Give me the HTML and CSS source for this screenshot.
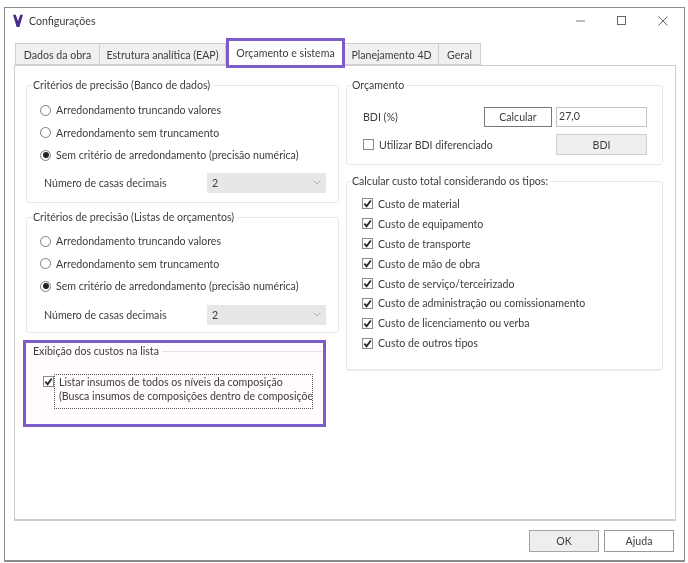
FILE: index.html
```html
<!DOCTYPE html>
<html lang="pt">
<head>
<meta charset="utf-8">
<title>Configurações</title>
<link rel="stylesheet" href="styles.css">
</head>
<body>
<svg class="defs" width="0" height="0" aria-hidden="true">
  <symbol id="chk" viewBox="0 0 12 12"><path d="M2.600 6.200 5 9 9.600 2.600" fill="none" stroke="#222" stroke-width="1.900"/></symbol>
</svg>
<div class="window">
  <header class="titlebar">
    <svg class="logo" viewBox="0 0 11 14"><path d="M0 0h3l2.500 7L8 0h3L8.200 9.500 7 13.500H4L2.800 9.500z" fill="#4b2a8c"/></svg>
    <span class="title">Configurações</span>
    <div class="controls">
      <svg viewBox="0 0 10 10"><path d="M0 5h9" stroke="#777" fill="none"/></svg>
      <svg viewBox="0 0 10 10"><rect x=".5" y=".5" width="8" height="8" stroke="#666" fill="none"/></svg>
      <svg viewBox="0 0 10 10"><path d="M.5.5l9 9M9.500.5l-9 9" stroke="#666" fill="none"/></svg>
    </div>
  </header>

  <nav class="tabs">
    <div class="tab w1">Dados da obra</div>
    <div class="tab w2">Estrutura analítica (EAP)</div>
    <div class="tab active">Orçamento e sistema</div>
    <div class="tab w4">Planejamento 4D</div>
    <div class="tab w5">Geral</div>
  </nav>

  <main class="pane">
    <div class="col left">
      <fieldset class="group g-prec">
        <legend>Critérios de precisão (Banco de dados)</legend>
        <label class="radio"><span class="dot"></span>Arredondamento truncando valores</label>
        <label class="radio"><span class="dot"></span>Arredondamento sem truncamento</label>
        <label class="radio"><span class="dot on"></span>Sem critério de arredondamento (precisão numérica)</label>
        <div class="decimals"><span>Número de casas decimais</span>
          <div class="select">2<svg viewBox="0 0 8 5"><path d="M.5.5 4 4 7.500.5" stroke="#aaa" fill="none"/></svg></div>
        </div>
      </fieldset>
      <fieldset class="group g-prec">
        <legend>Critérios de precisão (Listas de orçamentos)</legend>
        <label class="radio"><span class="dot"></span>Arredondamento truncando valores</label>
        <label class="radio"><span class="dot"></span>Arredondamento sem truncamento</label>
        <label class="radio"><span class="dot on"></span>Sem critério de arredondamento (precisão numérica)</label>
        <div class="decimals"><span>Número de casas decimais</span>
          <div class="select">2<svg viewBox="0 0 8 5"><path d="M.5.5 4 4 7.500.5" stroke="#aaa" fill="none"/></svg></div>
        </div>
      </fieldset>
      <section class="highlight">
        <div class="hl-legend"><span>Exibição dos custos na lista</span><i></i></div>
        <div class="hl-row">
          <span class="box"><svg><use href="#chk"/></svg></span>
          <div class="focus">Listar insumos de todos os níveis da composição<br>(Busca insumos de composições dentro de composições)</div>
        </div>
      </section>
    </div>

    <div class="col right">
      <fieldset class="group g-orc">
        <legend>Orçamento</legend>
        <div class="bdi-row"><span class="bdi-label">BDI (%)</span><button class="btn calc">Calcular</button><div class="input">27,0</div></div>
        <div class="bdi-row second"><label class="check wide"><span class="box"></span>Utilizar BDI diferenciado</label><button class="btn flat">BDI</button></div>
      </fieldset>
      <fieldset class="group g-custo">
        <legend>Calcular custo total considerando os tipos:</legend>
        <label class="check"><span class="box"><svg><use href="#chk"/></svg></span>Custo de material</label>
        <label class="check"><span class="box"><svg><use href="#chk"/></svg></span>Custo de equipamento</label>
        <label class="check"><span class="box"><svg><use href="#chk"/></svg></span>Custo de transporte</label>
        <label class="check"><span class="box"><svg><use href="#chk"/></svg></span>Custo de mão de obra</label>
        <label class="check"><span class="box"><svg><use href="#chk"/></svg></span>Custo de serviço/terceirizado</label>
        <label class="check"><span class="box"><svg><use href="#chk"/></svg></span>Custo de administração ou comissionamento</label>
        <label class="check"><span class="box"><svg><use href="#chk"/></svg></span>Custo de licenciamento ou verba</label>
        <label class="check"><span class="box"><svg><use href="#chk"/></svg></span>Custo de outros tipos</label>
      </fieldset>
    </div>
  </main>

  <footer class="footer">
    <button class="btn ok">OK</button>
    <button class="btn help">Ajuda</button>
  </footer>
</div>
</body>
</html>
```
FILE: styles.css
```css
* { box-sizing: border-box; }
html, body { margin: 0; height: 100%; background: #fff; overflow: hidden; }
body {
  font-family: Lato, "Noto Sans", sans-serif;
  font-size: 10.6px;
  color: #3c3c3c;
  line-height: 14px;
}
.defs { position: absolute; }
.window {
  width: 681px;
  height: 555px;
  margin: 7px 0 0 4px;
  border: 1px solid #8c8c8c;
  border-width: 1px 1px 2px 1px;
  display: flex;
  flex-direction: column;
  background: #fff;
  filter: blur(.25px);
}
.titlebar {
  height: 30px;
  flex: none;
  display: flex;
  align-items: center;
  padding: 0 16px 4px 8px;
}
.logo { width: 10px; height: 14px; margin-right: 6px; }
.controls { margin-left: auto; display: flex; gap: 31px; }
.controls svg { width: 10px; height: 10px; display: block; }
.tabs {
  height: 27px;
  flex: none;
  display: flex;
  align-items: flex-end;
  padding-left: 10px;
  position: relative;
  z-index: 1;
}
.tab {
  height: 22px;
  border: 1px solid #cfcfcf;
  border-left: 0;
  background: #f0f0f0;
  display: flex;
  align-items: center;
  justify-content: center;
  padding-top: 1px;
}
.tab:first-child { border-left: 1px solid #cfcfcf; }
.w1 { width: 85px; }
.w2 { width: 126px; }
.w4 { width: 94px; }
.w5 { width: 42px; }
.tab.active {
  width: 119px;
  height: 30px;
  margin-bottom: -3px;
  border: 3px solid #7b5cc8;
  background: #fff;
  padding: 0 0 1px;
}
.pane {
  width: 662px;
  height: 456px;
  flex: none;
  margin-left: 9px;
  border: 1px solid #cdcdcd;
  border-bottom-width: 2px;
  padding: 11px 0 0 11px;
  display: grid;
  grid-template-columns: 313px 317px;
  column-gap: 7px;
  align-content: start;
}
.col { display: flex; flex-direction: column; min-width: 0; }
.group {
  margin: 0;
  min-width: 0;
  border: 1px solid #e8e8e8;
  border-radius: 3px;
  padding: 0;
}
.group legend { padding: 0 3px 0 1px; line-height: 16px; }
.g-prec { padding: 6px 12px 0 13px; }
.g-prec legend { margin-left: -8px; }
.g-prec + .g-prec { margin-top: 6px; padding-top: 5px; }
.g-prec + .g-prec .decimals { margin-top: 7px; }
.left .g-prec:first-child { height: 126px; }
.left .g-prec:nth-child(2) { height: 124px; }
.radio { display: flex; align-items: center; height: 22.500px; }
.dot {
  width: 11px;
  height: 11px;
  border: 1px solid #7d7d7d;
  border-radius: 50%;
  margin-right: 5px;
  flex: none;
  display: flex;
  align-items: center;
  justify-content: center;
}
.dot.on::after { content: ""; width: 6px; height: 6px; border-radius: 50%; background: #222; }
.decimals { display: flex; align-items: center; justify-content: space-between; padding-left: 4px; margin-top: 6px; }
.select {
  width: 119px;
  height: 20px;
  background: #e7e7e7;
  padding: 0 5px;
  display: flex;
  align-items: center;
  justify-content: space-between;
}
.select svg { width: 8px; height: 5px; }
.highlight {
  width: 303px;
  height: 87px;
  margin: 7px 0 0 -3px;
  border: 3px solid #7b5cc8;
  background: #fffbff;
  padding: 0 1px 0 7px;
}
.hl-legend { display: flex; align-items: center; height: 16px; gap: 3px; }
.hl-legend i { flex: 1; border-top: 1px solid #e6dfe6; }
.hl-row { display: flex; align-items: flex-start; margin: 15px 0 0 10px; }
.hl-row .box { margin-top: 2px; flex: none; }
.focus {
  width: 259px;
  height: 35px;
  border: 1px dotted #555;
  padding-left: 4px;
  overflow: hidden;
  white-space: nowrap;
  line-height: 14px;
}
.box {
  width: 11px;
  height: 11px;
  border: 1px solid #8a8a8a;
  background: #fff;
  display: block;
  flex: none;
}
.box svg { width: 11px; height: 11px; display: block; margin: -1px 0 0 -1px; }
.g-orc { height: 88px; padding: 14px 15px 0 16px; }
.g-orc legend { margin-left: -12px; }
.bdi-row { display: flex; align-items: center; height: 20px; }
.bdi-row.second { height: 21px; margin-top: 7px; }
.bdi-label { width: 121px; }
.btn {
  font: inherit;
  color: inherit;
  padding: 0;
  border: 1px solid #777;
  background: #fff;
}
.calc { width: 68px; height: 20px; }
.input {
  width: 91px;
  height: 20px;
  margin-left: 4px;
  border: 1px solid #c4c4c4;
  padding-left: 2px;
  line-height: 16px;
}
.check { display: flex; align-items: center; height: 19.900px; }
.check .box { margin-right: 5px; }
.wide { width: 193px; height: auto; }
.flat { width: 91px; height: 21px; background: #efefef; border-color: #cfcfcf; }
.g-custo { height: 197px; margin-top: 8px; padding: 5px 0 0 15px; box-shadow: 0 1px 1px #eee; }
.g-custo legend { margin-left: -11px; }
.footer {
  flex: 1;
  display: flex;
  justify-content: flex-end;
  gap: 5px;
  padding: 9px 10px 0 0;
}
.footer .btn { width: 70px; height: 22px; }
.ok { background: #eee; border-color: #a5a5a5; }
.help { border-color: #999; }
```
